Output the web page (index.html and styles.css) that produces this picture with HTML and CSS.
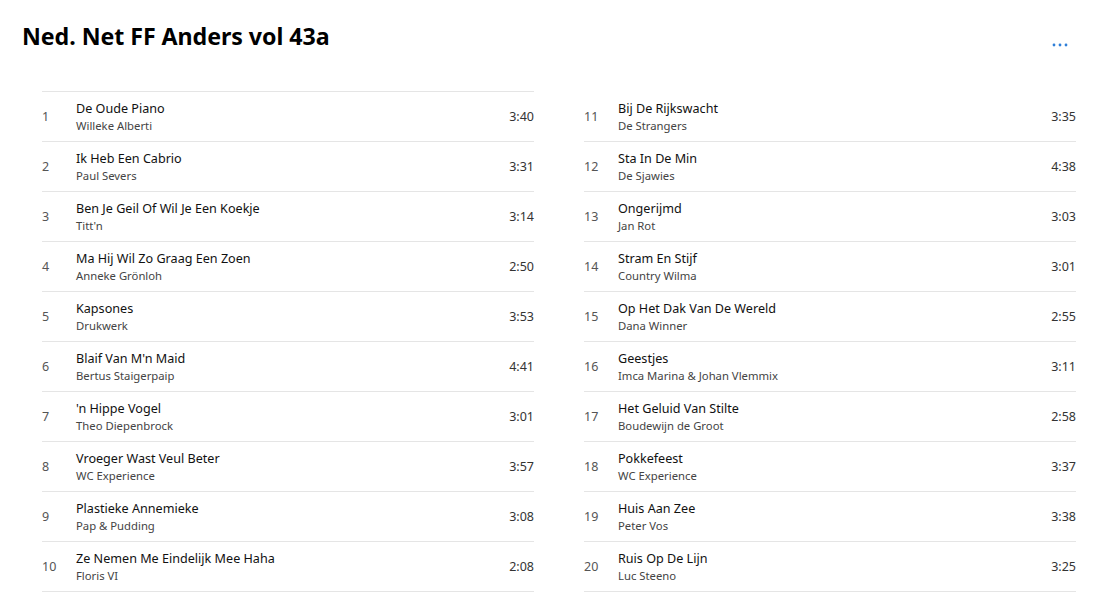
FILE: index.html
```html
<!DOCTYPE html>
<html>
<head>
<meta charset="utf-8">
<link rel="stylesheet" href="styles.css">
</head>
<body>
<div class="page">
  <header class="header">
    <h1 class="title">Ned. Net FF Anders vol 43a</h1>
    <button class="more" aria-label="Meer">
      <svg width="16" height="4" viewBox="0 0 16 4"><circle cx="2" cy="2" r="1.4" fill="#2f7fd8"/><circle cx="8" cy="2" r="1.4" fill="#2f7fd8"/><circle cx="14" cy="2" r="1.4" fill="#2f7fd8"/></svg>
    </button>
  </header>
  <div class="columns">
    <ol class="list list-first">
      <li class="row"><span class="num">1</span><div class="info"><div class="song">De Oude Piano</div><div class="artist">Willeke Alberti</div></div><span class="dur">3:40</span></li>
      <li class="row"><span class="num">2</span><div class="info"><div class="song">Ik Heb Een Cabrio</div><div class="artist">Paul Severs</div></div><span class="dur">3:31</span></li>
      <li class="row"><span class="num">3</span><div class="info"><div class="song">Ben Je Geil Of Wil Je Een Koekje</div><div class="artist">Titt'n</div></div><span class="dur">3:14</span></li>
      <li class="row"><span class="num">4</span><div class="info"><div class="song">Ma Hij Wil Zo Graag Een Zoen</div><div class="artist">Anneke Grönloh</div></div><span class="dur">2:50</span></li>
      <li class="row"><span class="num">5</span><div class="info"><div class="song">Kapsones</div><div class="artist">Drukwerk</div></div><span class="dur">3:53</span></li>
      <li class="row"><span class="num">6</span><div class="info"><div class="song">Blaif Van M'n Maid</div><div class="artist">Bertus Staigerpaip</div></div><span class="dur">4:41</span></li>
      <li class="row"><span class="num">7</span><div class="info"><div class="song">'n Hippe Vogel</div><div class="artist">Theo Diepenbrock</div></div><span class="dur">3:01</span></li>
      <li class="row"><span class="num">8</span><div class="info"><div class="song">Vroeger Wast Veul Beter</div><div class="artist">WC Experience</div></div><span class="dur">3:57</span></li>
      <li class="row"><span class="num">9</span><div class="info"><div class="song">Plastieke Annemieke</div><div class="artist">Pap &amp; Pudding</div></div><span class="dur">3:08</span></li>
      <li class="row"><span class="num">10</span><div class="info"><div class="song">Ze Nemen Me Eindelijk Mee Haha</div><div class="artist">Floris VI</div></div><span class="dur">2:08</span></li>
    </ol>
    <ol class="list">
      <li class="row"><span class="num">11</span><div class="info"><div class="song">Bij De Rijkswacht</div><div class="artist">De Strangers</div></div><span class="dur">3:35</span></li>
      <li class="row"><span class="num">12</span><div class="info"><div class="song">Sta In De Min</div><div class="artist">De Sjawies</div></div><span class="dur">4:38</span></li>
      <li class="row"><span class="num">13</span><div class="info"><div class="song">Ongerijmd</div><div class="artist">Jan Rot</div></div><span class="dur">3:03</span></li>
      <li class="row"><span class="num">14</span><div class="info"><div class="song">Stram En Stijf</div><div class="artist">Country Wilma</div></div><span class="dur">3:01</span></li>
      <li class="row"><span class="num">15</span><div class="info"><div class="song">Op Het Dak Van De Wereld</div><div class="artist">Dana Winner</div></div><span class="dur">2:55</span></li>
      <li class="row"><span class="num">16</span><div class="info"><div class="song">Geestjes</div><div class="artist">Imca Marina &amp; Johan Vlemmix</div></div><span class="dur">3:11</span></li>
      <li class="row"><span class="num">17</span><div class="info"><div class="song">Het Geluid Van Stilte</div><div class="artist">Boudewijn de Groot</div></div><span class="dur">2:58</span></li>
      <li class="row"><span class="num">18</span><div class="info"><div class="song">Pokkefeest</div><div class="artist">WC Experience</div></div><span class="dur">3:37</span></li>
      <li class="row"><span class="num">19</span><div class="info"><div class="song">Huis Aan Zee</div><div class="artist">Peter Vos</div></div><span class="dur">3:38</span></li>
      <li class="row"><span class="num">20</span><div class="info"><div class="song">Ruis Op De Lijn</div><div class="artist">Luc Steeno</div></div><span class="dur">3:25</span></li>
    </ol>
  </div>
</div>
</body>
</html>
```
FILE: styles.css
```css
* { box-sizing: border-box; }
html, body { margin: 0; padding: 0; background: #fff; }
body {
  font-family: "Noto Sans", "Open Sans", "Liberation Sans", sans-serif;
  color: #000;
  width: 1113px;
  height: 594px;
  overflow: hidden;
}
.page { padding: 0 37px 0 42px; }
.header {
  display: flex;
  align-items: flex-start;
  justify-content: space-between;
  margin-left: -20px;
  height: 91px;
  padding-top: 20px;
}
.title {
  margin: 0;
  font-size: 23.2px;
  line-height: 32px;
  font-weight: 700;
  letter-spacing: -0.05px;
}
.more {
  border: 0;
  background: transparent;
  padding: 0;
  margin: 23px 8px 0 0;
  width: 16px;
  height: 4px;
  display: flex;
}
.columns {
  display: grid;
  grid-template-columns: 1fr 1fr;
  column-gap: 50px;
}
.list { list-style: none; margin: 0; padding: 0; }
.list-first { border-top: 1px solid #e5e5e5; }
.list:not(.list-first) { padding-top: 1px; }
.row {
  display: flex;
  align-items: center;
  height: 50px;
  border-bottom: 1px solid #e5e5e5;
}
.num {
  width: 34px;
  flex: none;
  font-size: 12.5px;
  color: #555;
}
.info {
  flex: 1;
  min-width: 0;
  display: flex;
  flex-direction: column;
}
.song {
  font-size: 12.6px;
  line-height: 17px;
  color: #111;
}
.artist {
  font-size: 11.3px;
  line-height: 17px;
  color: #444;
}
.dur {
  font-size: 12.5px;
  color: #333;
}
```
